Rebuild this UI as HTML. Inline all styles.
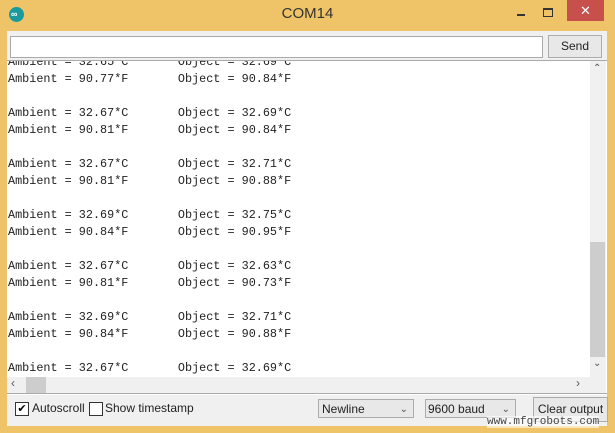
<!DOCTYPE html>
<html><head><style>
body{margin:0;width:615px;height:433px;background:#efc468;position:relative;overflow:hidden;font-family:"Liberation Sans",sans-serif}
.a{position:absolute}
.mono{font-family:"Liberation Mono",monospace;font-size:11.8px;white-space:pre;color:#222}
</style></head><body>
<div class="a" style="left:9px;top:7px;width:15px;height:15px;border-radius:50%;background:#1a9a9c"></div>
<div class="a" style="left:11px;top:9px;color:#fff;font-size:9px;font-weight:bold">∞</div>
<div class="a" style="left:0;width:615px;top:5px;text-align:center;font-size:15px;color:#333">COM14</div>
<div class="a" style="left:517px;top:14px;width:8px;height:2px;background:#333"></div>
<div class="a" style="left:543px;top:8px;width:8px;height:6px;border:1px solid #333;border-top-width:2px"></div>
<div class="a" style="left:567px;top:0;width:37px;height:21px;background:#c7504d;color:#fff;text-align:center;font-size:13px;line-height:21px">✕</div>
<div class="a" style="left:7px;top:31px;width:600px;height:395px;background:#f0f0f0"></div>
<div class="a" style="left:10px;top:36px;width:531px;height:20px;background:#fff;border:1px solid #aaa"></div>
<div class="a" style="left:548px;top:35px;width:52px;height:21px;background:#e8e8e8;border:1px solid #acacac;font-size:12px;text-align:center;line-height:21px;color:#222">Send</div>
<div class="a" style="left:7px;top:60px;width:600px;height:334px;background:#fff;border-top:1px solid #aaa;overflow:hidden">
<div class="mono a" style="left:1px;top:-7px;line-height:17px">Ambient = 32.65*C       Object = 32.69*C
Ambient = 90.77*F       Object = 90.84*F

Ambient = 32.67*C       Object = 32.69*C
Ambient = 90.81*F       Object = 90.84*F

Ambient = 32.67*C       Object = 32.71*C
Ambient = 90.81*F       Object = 90.88*F

Ambient = 32.69*C       Object = 32.75*C
Ambient = 90.84*F       Object = 90.95*F

Ambient = 32.67*C       Object = 32.63*C
Ambient = 90.81*F       Object = 90.73*F

Ambient = 32.69*C       Object = 32.71*C
Ambient = 90.84*F       Object = 90.88*F

Ambient = 32.67*C       Object = 32.69*C</div>
</div>
<div class="a" style="left:590px;top:61px;width:16px;height:316px;background:#f0f0f0"></div>
<div class="a" style="left:590px;top:242px;width:15px;height:115px;background:#cdcdcd"></div>
<div class="a" style="left:593px;top:63px;font-size:10px;color:#555">⌃</div>
<div class="a" style="left:593px;top:358px;font-size:10px;color:#555">⌄</div>
<div class="a" style="left:7px;top:377px;width:599px;height:16px;background:#f0f0f0"></div>
<div class="a" style="left:26px;top:377px;width:20px;height:16px;background:#cdcdcd"></div>
<div class="a" style="left:11px;top:376px;font-size:12px;color:#555">‹</div>
<div class="a" style="left:576px;top:376px;font-size:12px;color:#555">›</div>
<div class="a" style="left:7px;top:393px;width:600px;height:1px;background:#aaa"></div>
<div class="a" style="left:15px;top:402px;width:12px;height:12px;border:1px solid #333;background:#fff;font-size:11px;line-height:12px;text-align:center">✔</div>
<div class="a" style="left:32px;top:401px;font-size:12px;color:#222">Autoscroll</div>
<div class="a" style="left:89px;top:402px;width:12px;height:12px;border:1px solid #333;background:#fff"></div>
<div class="a" style="left:105px;top:401px;font-size:12px;color:#222">Show timestamp</div>
<div class="a" style="left:318px;top:399px;width:96px;height:19px;background:#e8e8e8;border:1px solid #acacac;font-size:12px;line-height:19px;color:#222;padding-left:3px;box-sizing:border-box">Newline<span style="position:absolute;right:5px;color:#555;font-size:10px">⌄</span></div>
<div class="a" style="left:425px;top:399px;width:91px;height:19px;background:#e8e8e8;border:1px solid #acacac;font-size:12px;line-height:19px;color:#222;padding-left:2px;box-sizing:border-box">9600 baud<span style="position:absolute;right:5px;color:#555;font-size:10px">⌄</span></div>
<div class="a" style="left:533px;top:397px;width:73px;height:23px;background:#e8e8e8;border:1px solid #acacac;font-size:12px;line-height:23px;text-align:center;color:#222">Clear output</div>
<div class="a" style="left:487px;top:416px;font-family:'Liberation Mono',monospace;font-size:11px;color:#444;background:rgba(255,255,255,.6)">www.mfgrobots.com</div>
</body></html>
